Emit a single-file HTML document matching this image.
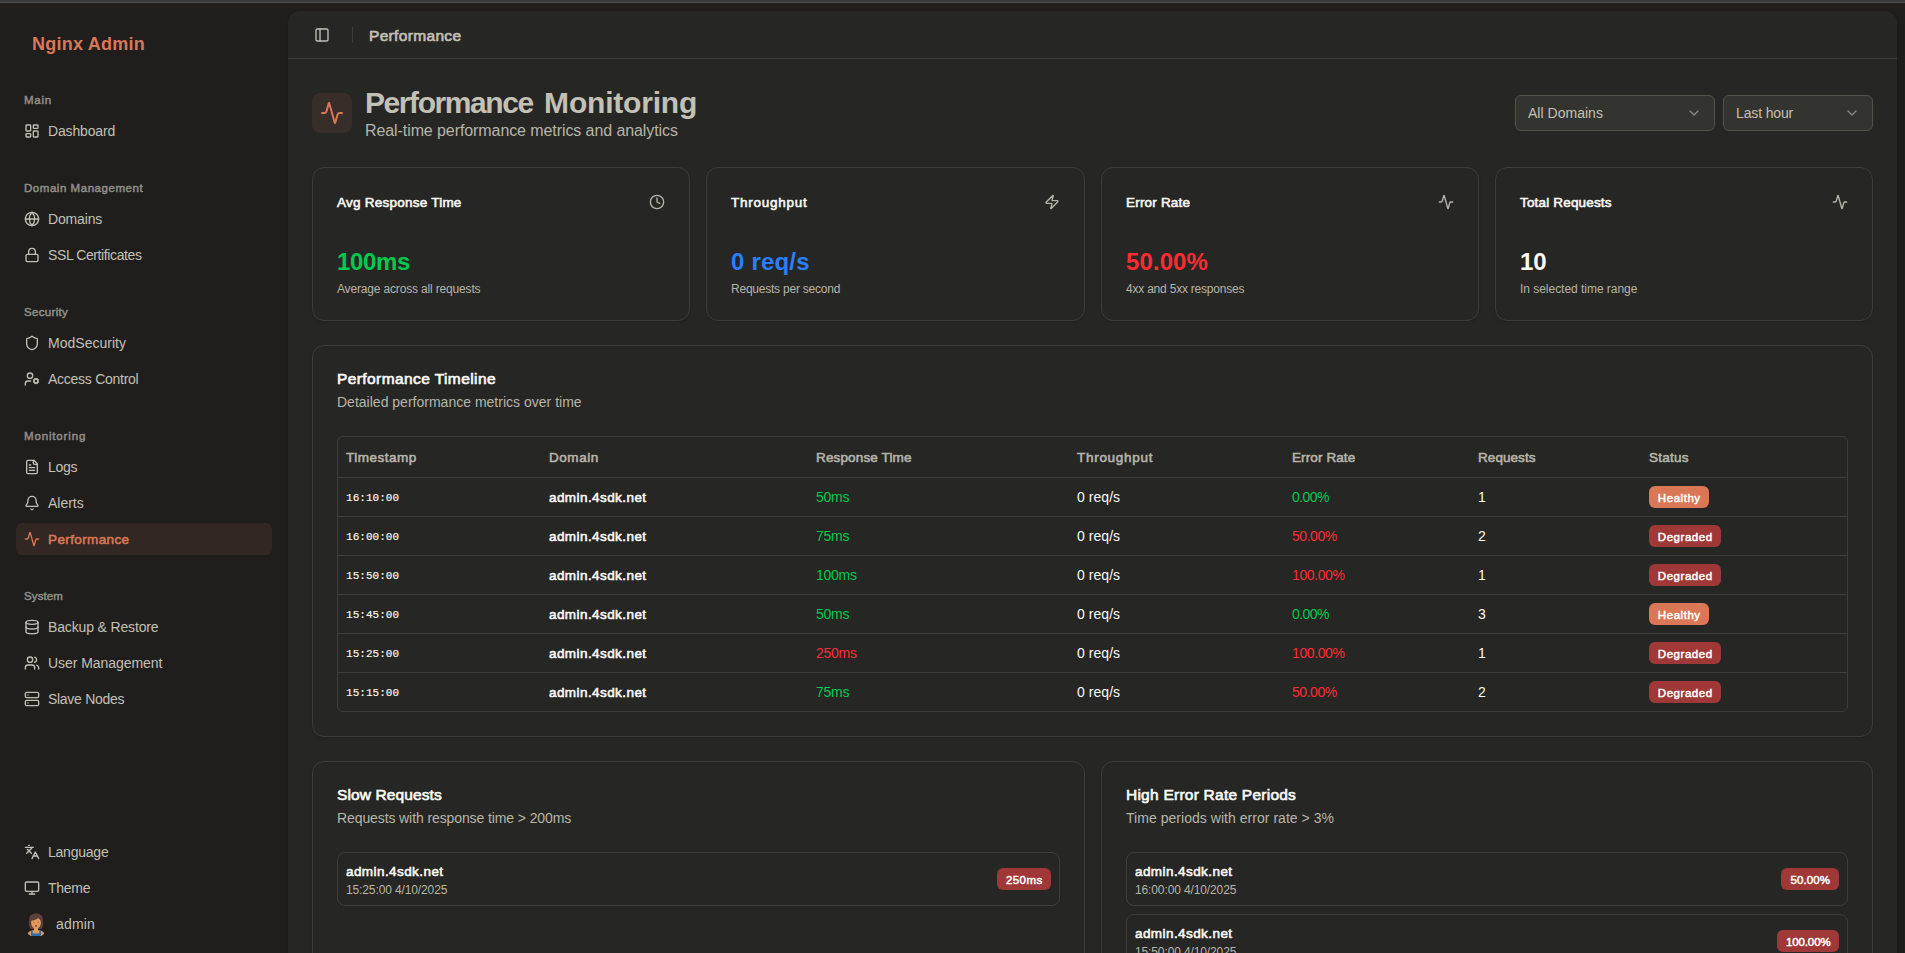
<!DOCTYPE html>
<html lang="en">
<head>
<meta charset="utf-8">
<title>Performance - Nginx Admin</title>
<style>
*{box-sizing:border-box;margin:0;padding:0}
html,body{width:1905px;height:953px;overflow:hidden;background:#1f1e1d;font-family:"Liberation Sans",sans-serif;color:#c3c0b6}
body{position:relative}
span{white-space:pre}
svg.i{fill:none;stroke:currentColor;stroke-width:2;stroke-linecap:round;stroke-linejoin:round;display:block;flex:none}
.sm{-webkit-text-stroke:.042em currentColor}
.topband{position:absolute;left:0;top:0;width:1905px;height:3px;background:#3b3b3b;border-bottom:1px solid #4f4f4f;z-index:5}
.sb{position:absolute;left:0;top:3px;width:288px;height:950px;background:#1f1e1d}
.brand{position:absolute;left:32px;top:21px;height:40px;line-height:40px;font-size:18px;font-weight:700;color:#d97757;white-space:nowrap}
.gl{position:absolute;left:24px;height:32px;line-height:32px;padding-top:1px;font-size:12px;color:#918e87;white-space:nowrap}
.it{position:absolute;left:16px;width:256px;height:32px;border-radius:6px;padding:0 8px;display:flex;align-items:center;gap:8px;font-size:14px;color:#c3c0b6;white-space:nowrap}
.it svg.i{width:16px;height:16px}
.it.act{background:#322723;color:#d97757}
.main{position:absolute;left:288px;top:11px;width:1609px;height:960px;background:#262624;border-radius:12px;box-shadow:0 1px 3px rgba(0,0,0,.1),0 1px 2px -1px rgba(0,0,0,.1)}
.hdr{position:absolute;left:0;top:0;width:100%;height:48px;border-bottom:1px solid #3e3e38}
.hdr .pl{position:absolute;left:26px;top:16px;width:16px;height:16px;color:#c3c0b6}
.hdr .sep{position:absolute;left:64px;top:16px;width:1px;height:16px;background:#3e3e38}
.hdr .tt{position:absolute;left:81px;top:13px;height:24px;line-height:24px;font-size:16px;color:#c3c0b6;white-space:nowrap}
.ibox{position:absolute;left:24px;top:82px;width:40px;height:40px;border-radius:8px;background:#382e29;color:#d97757;display:flex;align-items:center;justify-content:center}
.ibox svg{width:24px;height:24px}
h1{position:absolute;left:77px;top:74px;height:36px;line-height:36px;font-size:30px;font-weight:700;color:#c3c0b6;white-space:nowrap}
.sub{position:absolute;left:77px;top:108px;height:24px;line-height:24px;font-size:16px;color:#b7b5a9;white-space:nowrap}
.sel{position:absolute;top:84px;height:36px;border:1px solid #52514a;border-radius:6px;background:#33332f;padding:0 12px;display:flex;align-items:center;justify-content:space-between;font-size:14px;color:#c3c0b6;white-space:nowrap}
.sel svg{width:16px;height:16px;color:#8a887f}
.card{position:absolute;border:1px solid #3e3e38;border-radius:12px;background:#262624;box-shadow:0 1px 3px rgba(0,0,0,.1),0 1px 2px -1px rgba(0,0,0,.1)}
.stat .t{position:absolute;left:24px;top:24px;height:20px;line-height:20px;font-size:14px;color:#faf9f5;white-space:nowrap}
.stat svg{position:absolute;right:24px;top:26px;width:16px;height:16px;color:#b7b5a9}
.stat .v{position:absolute;left:24px;top:78px;height:32px;line-height:32px;font-size:24px;font-weight:700;white-space:nowrap}
.stat .d{position:absolute;left:24px;top:113px;height:16px;line-height:16px;font-size:12px;color:#b7b5a9;white-space:nowrap}
.ct{position:absolute;left:24px;top:25px;height:16px;line-height:16px;font-size:16px;color:#faf9f5;white-space:nowrap}
.cd{position:absolute;left:24px;top:46px;height:20px;line-height:20px;font-size:14px;color:#b7b5a9;white-space:nowrap}
.g{color:#00c950}.r{color:#fb2c36}.b{color:#2b7fff}.w{color:#faf9f5}
.tbl{position:absolute;left:24px;top:90px;width:1511px;height:276px;border:1px solid #3e3e38;border-radius:6px;overflow:hidden;font-size:14px;color:#faf9f5}
.tr{position:absolute;left:0;width:1509px;border-bottom:1px solid #3e3e38}
.tr.h{top:0;height:41px;color:#b7b5a9}
.tr>div{position:absolute;top:0;height:100%;display:flex;align-items:center;white-space:nowrap}
.c1{left:8px}.c2{left:211px}.c3{left:478px}.c4{left:739px}.c5{left:954px}.c6{left:1140px}.c7{left:1311px}
.m{font-family:"Liberation Mono",monospace;font-size:11px;padding-top:1px;-webkit-text-stroke:.15px currentColor}
.bd{display:inline-flex;align-items:center;justify-content:center;height:22px;padding:1px 0 0 .5px;border-radius:6px;font-size:12px;color:#fff;white-space:nowrap}
.bd.h{background:#d97757}
.bd.x{background:#9f3837}
.li{position:absolute;left:24px;width:723px;height:54px;border:1px solid #3e3e38;border-radius:8px}
.li .n{position:absolute;left:8px;top:8px;height:20px;line-height:20px;font-size:14px;color:#faf9f5;white-space:nowrap}
.li .s{position:absolute;left:8px;top:29px;height:16px;line-height:16px;font-size:12px;color:#b7b5a9;white-space:nowrap}
.li .bd{position:absolute;right:8px;top:15px}
</style>
</head>
<body>
<div class="topband"></div>
<div class="sb">
<div class="brand"><span style="letter-spacing:0.234px;">Nginx Admin</span></div>
<div class="gl" style="top:80px"><span class="sm" style="letter-spacing:0.761px;font-size:11.5px;">Main</span></div>
<div class="it" style="top:112px"><svg class="i " viewBox="0 0 24 24"><rect width="7" height="9" x="3" y="3" rx="1"/><rect width="7" height="5" x="14" y="3" rx="1"/><rect width="7" height="9" x="14" y="12" rx="1"/><rect width="7" height="5" x="3" y="16" rx="1"/></svg><span style="letter-spacing:-0.153px;">Dashboard</span></div>
<div class="gl" style="top:168px"><span class="sm" style="letter-spacing:0.542px;font-size:11.5px;">Domain Management</span></div>
<div class="it" style="top:200px"><svg class="i " viewBox="0 0 24 24"><circle cx="12" cy="12" r="10"/><path d="M12 2a14.5 14.5 0 0 0 0 20 14.5 14.5 0 0 0 0-20"/><path d="M2 12h20"/></svg><span style="letter-spacing:-0.146px;">Domains</span></div>
<div class="it" style="top:236px"><svg class="i " viewBox="0 0 24 24"><rect width="18" height="11" x="3" y="11" rx="2" ry="2"/><path d="M7 11V7a5 5 0 0 1 10 0v4"/></svg><span style="letter-spacing:-0.397px;">SSL Certificates</span></div>
<div class="gl" style="top:292px"><span class="sm" style="letter-spacing:0.327px;font-size:11.5px;">Security</span></div>
<div class="it" style="top:324px"><svg class="i " viewBox="0 0 24 24"><path d="M20 13c0 5-3.5 7.5-7.66 8.950a1 1 0 0 1-.670-.010C7.500 20.500 4 18 4 13V6a1 1 0 0 1 1-1c2 0 4.500-1.200 6.240-2.720a1.170 1.170 0 0 1 1.520 0C14.510 3.810 17 5 19 5a1 1 0 0 1 1 1z"/></svg><span style="letter-spacing:0.018px;">ModSecurity</span></div>
<div class="it" style="top:360px"><svg class="i " viewBox="0 0 24 24"><path d="M10 15H6a4 4 0 0 0-4 4v2"/><path d="m14.305 16.530.923-.382"/><path d="m15.228 13.852-.923-.383"/><path d="m16.852 12.228-.383-.923"/><path d="m16.852 17.772-.383.924"/><path d="m19.148 12.228.383-.923"/><path d="m19.530 18.696-.382-.924"/><path d="m20.772 13.852.924-.383"/><path d="m20.772 16.148.924.383"/><circle cx="18" cy="15" r="3"/><circle cx="9" cy="7" r="4"/></svg><span style="letter-spacing:-0.263px;">Access Control</span></div>
<div class="gl" style="top:416px"><span class="sm" style="letter-spacing:0.842px;font-size:11.5px;">Monitoring</span></div>
<div class="it" style="top:448px"><svg class="i " viewBox="0 0 24 24"><path d="M15 2H6a2 2 0 0 0-2 2v16a2 2 0 0 0 2 2h12a2 2 0 0 0 2-2V7Z"/><path d="M14 2v4a2 2 0 0 0 2 2h4"/><path d="M10 9H8"/><path d="M16 13H8"/><path d="M16 17H8"/></svg><span style="letter-spacing:-0.274px;">Logs</span></div>
<div class="it" style="top:484px"><svg class="i " viewBox="0 0 24 24"><path d="M10.268 21a2 2 0 0 0 3.464 0"/><path d="M3.262 15.326A1 1 0 0 0 4 17h16a1 1 0 0 0 .740-1.673C19.410 13.956 18 12.499 18 8A6 6 0 0 0 6 8c0 4.499-1.411 5.956-2.738 7.326"/></svg><span style="letter-spacing:-0.018px;">Alerts</span></div>
<div class="it act" style="top:520px"><svg class="i " viewBox="0 0 24 24"><path d="M22 12h-2.480a2 2 0 0 0-1.930 1.460l-2.350 8.360a.250.250 0 0 1-.480 0L9.240 2.180a.250.250 0 0 0-.480 0l-2.350 8.360A2 2 0 0 1 4.490 12H2"/></svg><span class="sm" style="letter-spacing:0.381px;font-size:13.5px;">Performance</span></div>
<div class="gl" style="top:576px"><span class="sm" style="letter-spacing:0.119px;font-size:11.5px;">System</span></div>
<div class="it" style="top:608px"><svg class="i " viewBox="0 0 24 24"><ellipse cx="12" cy="5" rx="9" ry="3"/><path d="M3 5V19A9 3 0 0 0 21 19V5"/><path d="M3 12A9 3 0 0 0 21 12"/></svg><span style="letter-spacing:-0.151px;">Backup &amp; Restore</span></div>
<div class="it" style="top:644px"><svg class="i " viewBox="0 0 24 24"><path d="M16 21v-2a4 4 0 0 0-4-4H6a4 4 0 0 0-4 4v2"/><circle cx="9" cy="7" r="4"/><path d="M22 21v-2a4 4 0 0 0-3-3.870"/><path d="M16 3.130a4 4 0 0 1 0 7.750"/></svg><span style="letter-spacing:-0.060px;">User Management</span></div>
<div class="it" style="top:680px"><svg class="i " viewBox="0 0 24 24"><rect width="20" height="8" x="2" y="2" rx="2" ry="2"/><rect width="20" height="8" x="2" y="14" rx="2" ry="2"/><line x1="6" x2="6.010" y1="6" y2="6"/><line x1="6" x2="6.010" y1="18" y2="18"/></svg><span style="letter-spacing:-0.294px;">Slave Nodes</span></div>
<div class="it" style="top:833px"><svg class="i " viewBox="0 0 24 24"><path d="m5 8 6 6"/><path d="m4 14 6-6 2-3"/><path d="M2 5h12"/><path d="M7 2h1"/><path d="m22 22-5-10-5 10"/><path d="M14 18h6"/></svg><span style="letter-spacing:-0.226px;">Language</span></div>
<div class="it" style="top:869px"><svg class="i " viewBox="0 0 24 24"><rect width="20" height="14" x="2" y="3" rx="2"/><line x1="8" x2="16" y1="21" y2="21"/><line x1="12" x2="12" y1="17" y2="21"/></svg><span style="letter-spacing:-0.284px;">Theme</span></div>
<div class="it" style="top:905px"><svg viewBox="0 0 24 24" style="width:24px;height:24px;flex:none"><ellipse cx="12" cy="21.300" rx="8" ry="3.300" fill="#e39a5e"/><path d="M6.900 19.100V23.600Q12 25.300 17.100 23.600V19.100L15.300 18.600V21.600H8.700V18.600Z" fill="#2d6da6"/><path d="M5.100 9.800Q3.900 2 12 1.300 20.100 2 18.900 9.800 19.700 14.600 17.300 17H6.700Q4.300 14.600 5.100 9.800Z" fill="#5b413a"/><rect x="10" y="14" width="4" height="6.200" fill="#e39a5e"/><ellipse cx="12" cy="10.900" rx="4.900" ry="5.700" fill="#e39a5e"/><path d="M6.300 8.700Q6 3.300 12 3.100 18 3.300 17.700 8.700 15.900 8.200 14.400 5.700 11.500 8.600 6.300 8.700Z" fill="#5b413a"/><ellipse cx="12" cy="13.900" rx="1" ry=".6" fill="#3b1f14"/><circle cx="10" cy="10.300" r=".45" fill="#4a2c1c"/><circle cx="14" cy="10.300" r=".45" fill="#4a2c1c"/></svg><span style="letter-spacing:0.169px;">admin</span></div>
</div>
<div class="main">
<div class="hdr"><svg class="i pl" viewBox="0 0 24 24"><rect width="18" height="18" x="3" y="3" rx="2"/><path d="M9 3v18"/></svg><div class="sep"></div><div class="tt"><span class="sm" style="letter-spacing:0.330px;font-size:15.5px;">Performance</span></div></div>
<div class="ibox"><svg class="i " viewBox="0 0 24 24"><path d="M22 12h-2.480a2 2 0 0 0-1.930 1.460l-2.350 8.360a.250.250 0 0 1-.480 0L9.240 2.180a.250.250 0 0 0-.480 0l-2.350 8.360A2 2 0 0 1 4.490 12H2"/></svg></div>
<h1><span style="letter-spacing:-1.421px;">Performance</span><span style="display:inline-block;width:11.3px"></span><span style="letter-spacing:-0.195px;">Monitoring</span></h1>
<div class="sub"><span style="letter-spacing:-0.086px;">Real-time performance metrics and analytics</span></div>
<div class="sel" style="left:1227px;width:200px"><span style="letter-spacing:0.019px;">All Domains</span><svg class="i " viewBox="0 0 24 24"><path d="m6 9 6 6 6-6"/></svg></div>
<div class="sel" style="left:1435px;width:150px"><span style="letter-spacing:-0.138px;">Last hour</span><svg class="i " viewBox="0 0 24 24"><path d="m6 9 6 6 6-6"/></svg></div>
<div class="card stat" style="left:24px;top:156px;width:378px;height:154px"><div class="t"><span class="sm" style="letter-spacing:0.238px;font-size:13.5px;">Avg Response Time</span></div><svg class="i " viewBox="0 0 24 24"><circle cx="12" cy="12" r="10"/><polyline points="12 6 12 12 16 14"/></svg><div class="v g"><span style="letter-spacing:-0.319px;">100ms</span></div><div class="d"><span style="letter-spacing:-0.165px;">Average across all requests</span></div></div>
<div class="card stat" style="left:418px;top:156px;width:379px;height:154px"><div class="t"><span class="sm" style="letter-spacing:0.741px;font-size:13.5px;">Throughput</span></div><svg class="i " viewBox="0 0 24 24"><path d="M4 14a1 1 0 0 1-.780-1.630l9.900-10.200a.500.500 0 0 1 .860.460l-1.920 6.020A1 1 0 0 0 13 10h7a1 1 0 0 1 .780 1.630l-9.900 10.200a.500.500 0 0 1-.860-.460l1.920-6.020A1 1 0 0 0 11 14z"/></svg><div class="v b"><span style="letter-spacing:0.186px;">0 req/s</span></div><div class="d"><span style="letter-spacing:-0.227px;">Requests per second</span></div></div>
<div class="card stat" style="left:813px;top:156px;width:378px;height:154px"><div class="t"><span class="sm" style="letter-spacing:0.191px;font-size:13.5px;">Error Rate</span></div><svg class="i " viewBox="0 0 24 24"><path d="M22 12h-2.480a2 2 0 0 0-1.930 1.460l-2.350 8.360a.250.250 0 0 1-.480 0L9.240 2.180a.250.250 0 0 0-.480 0l-2.350 8.360A2 2 0 0 1 4.490 12H2"/></svg><div class="v r"><span style="letter-spacing:0.090px;">50.00%</span></div><div class="d"><span style="letter-spacing:-0.212px;">4xx and 5xx responses</span></div></div>
<div class="card stat" style="left:1207px;top:156px;width:378px;height:154px"><div class="t"><span class="sm" style="letter-spacing:0.169px;font-size:13.5px;">Total Requests</span></div><svg class="i " viewBox="0 0 24 24"><path d="M22 12h-2.480a2 2 0 0 0-1.930 1.460l-2.350 8.360a.250.250 0 0 1-.480 0L9.240 2.180a.250.250 0 0 0-.480 0l-2.350 8.360A2 2 0 0 1 4.490 12H2"/></svg><div class="v w"><span>10</span></div><div class="d"><span style="letter-spacing:-0.032px;">In selected time range</span></div></div>
<div class="card" style="left:24px;top:334px;width:1561px;height:392px">
<div class="ct"><span class="sm" style="letter-spacing:0.412px;font-size:15.5px;">Performance Timeline</span></div>
<div class="cd"><span style="letter-spacing:0.008px;">Detailed performance metrics over time</span></div>
<div class="tbl">
<div class="tr h"><div class="c1"><span class="sm" style="letter-spacing:0.498px;font-size:13.5px;">Timestamp</span></div><div class="c2"><span class="sm" style="letter-spacing:0.558px;font-size:13.5px;">Domain</span></div><div class="c3"><span class="sm" style="letter-spacing:0.144px;font-size:13.5px;">Response Time</span></div><div class="c4"><span class="sm" style="letter-spacing:0.709px;font-size:13.5px;">Throughput</span></div><div class="c5"><span class="sm" style="letter-spacing:0.107px;font-size:13.5px;">Error Rate</span></div><div class="c6"><span class="sm" style="letter-spacing:0.060px;font-size:13.5px;">Requests</span></div><div class="c7"><span class="sm" style="letter-spacing:0.222px;font-size:13.5px;">Status</span></div></div>
<div class="tr" style="top:41px;height:39px;"><div class="c1 m"><span style="letter-spacing:0.038px;">16:10:00</span></div><div class="c2"><span class="sm" style="letter-spacing:0.425px;font-size:13.5px;">admin.4sdk.net</span></div><div class="c3 g"><span style="letter-spacing:-0.267px;">50ms</span></div><div class="c4"><span style="letter-spacing:0.044px;">0 req/s</span></div><div class="c5 g"><span style="letter-spacing:-0.534px;">0.00%</span></div><div class="c6"><span>1</span></div><div class="c7"><span class="bd h" style="width:60px"><span class="sm" style="letter-spacing:0.538px;font-size:11.5px;">Healthy</span></span></div></div>
<div class="tr" style="top:80px;height:39px;"><div class="c1 m"><span style="letter-spacing:0.038px;">16:00:00</span></div><div class="c2"><span class="sm" style="letter-spacing:0.425px;font-size:13.5px;">admin.4sdk.net</span></div><div class="c3 g"><span style="letter-spacing:-0.267px;">75ms</span></div><div class="c4"><span style="letter-spacing:0.044px;">0 req/s</span></div><div class="c5 r"><span style="letter-spacing:-0.452px;">50.00%</span></div><div class="c6"><span>2</span></div><div class="c7"><span class="bd x" style="width:72px"><span class="sm" style="letter-spacing:0.531px;font-size:11.5px;">Degraded</span></span></div></div>
<div class="tr" style="top:119px;height:39px;"><div class="c1 m"><span style="letter-spacing:0.038px;">15:50:00</span></div><div class="c2"><span class="sm" style="letter-spacing:0.425px;font-size:13.5px;">admin.4sdk.net</span></div><div class="c3 g"><span style="letter-spacing:-0.251px;">100ms</span></div><div class="c4"><span style="letter-spacing:0.044px;">0 req/s</span></div><div class="c5 r"><span style="letter-spacing:-0.397px;">100.00%</span></div><div class="c6"><span>1</span></div><div class="c7"><span class="bd x" style="width:72px"><span class="sm" style="letter-spacing:0.531px;font-size:11.5px;">Degraded</span></span></div></div>
<div class="tr" style="top:158px;height:39px;"><div class="c1 m"><span style="letter-spacing:0.038px;">15:45:00</span></div><div class="c2"><span class="sm" style="letter-spacing:0.425px;font-size:13.5px;">admin.4sdk.net</span></div><div class="c3 g"><span style="letter-spacing:-0.267px;">50ms</span></div><div class="c4"><span style="letter-spacing:0.044px;">0 req/s</span></div><div class="c5 g"><span style="letter-spacing:-0.534px;">0.00%</span></div><div class="c6"><span>3</span></div><div class="c7"><span class="bd h" style="width:60px"><span class="sm" style="letter-spacing:0.538px;font-size:11.5px;">Healthy</span></span></div></div>
<div class="tr" style="top:197px;height:39px;"><div class="c1 m"><span style="letter-spacing:0.038px;">15:25:00</span></div><div class="c2"><span class="sm" style="letter-spacing:0.425px;font-size:13.5px;">admin.4sdk.net</span></div><div class="c3 r"><span style="letter-spacing:-0.251px;">250ms</span></div><div class="c4"><span style="letter-spacing:0.044px;">0 req/s</span></div><div class="c5 r"><span style="letter-spacing:-0.397px;">100.00%</span></div><div class="c6"><span>1</span></div><div class="c7"><span class="bd x" style="width:72px"><span class="sm" style="letter-spacing:0.531px;font-size:11.5px;">Degraded</span></span></div></div>
<div class="tr" style="top:236px;height:38px;border-bottom:0;"><div class="c1 m"><span style="letter-spacing:0.038px;">15:15:00</span></div><div class="c2"><span class="sm" style="letter-spacing:0.425px;font-size:13.5px;">admin.4sdk.net</span></div><div class="c3 g"><span style="letter-spacing:-0.267px;">75ms</span></div><div class="c4"><span style="letter-spacing:0.044px;">0 req/s</span></div><div class="c5 r"><span style="letter-spacing:-0.452px;">50.00%</span></div><div class="c6"><span>2</span></div><div class="c7"><span class="bd x" style="width:72px"><span class="sm" style="letter-spacing:0.531px;font-size:11.5px;">Degraded</span></span></div></div>
</div></div>
<div class="card" style="left:24px;top:750px;width:773px;height:300px">
<div class="ct"><span class="sm" style="letter-spacing:0.113px;font-size:15.5px;">Slow Requests</span></div>
<div class="cd"><span style="letter-spacing:-0.102px;">Requests with response time &gt; 200ms</span></div>
<div class="li" style="top:90px"><div class="n"><span class="sm" style="letter-spacing:0.425px;font-size:13.5px;">admin.4sdk.net</span></div><div class="s"><span style="letter-spacing:-0.122px;">15:25:00 4/10/2025</span></div><span class="bd x" style="width:54px"><span class="sm" style="letter-spacing:0.438px;font-size:11.5px;">250ms</span></span></div>
</div>
<div class="card" style="left:813px;top:750px;width:772px;height:300px">
<div class="ct"><span class="sm" style="letter-spacing:0.242px;font-size:15.5px;">High Error Rate Periods</span></div>
<div class="cd"><span style="letter-spacing:0.036px;">Time periods with error rate &gt; 3%</span></div>
<div class="li" style="top:90px;width:722px"><div class="n"><span class="sm" style="letter-spacing:0.425px;font-size:13.5px;">admin.4sdk.net</span></div><div class="s"><span style="letter-spacing:-0.122px;">16:00:00 4/10/2025</span></div><span class="bd x" style="width:58px"><span class="sm" style="letter-spacing:0.106px;font-size:11.5px;">50.00%</span></span></div>
<div class="li" style="top:152px;width:722px"><div class="n"><span class="sm" style="letter-spacing:0.425px;font-size:13.5px;">admin.4sdk.net</span></div><div class="s"><span style="letter-spacing:-0.122px;">15:50:00 4/10/2025</span></div><span class="bd x" style="width:62px"><span class="sm" style="letter-spacing:-0.124px;font-size:11.5px;">100.00%</span></span></div>
</div>
</div>
</body>
</html>
